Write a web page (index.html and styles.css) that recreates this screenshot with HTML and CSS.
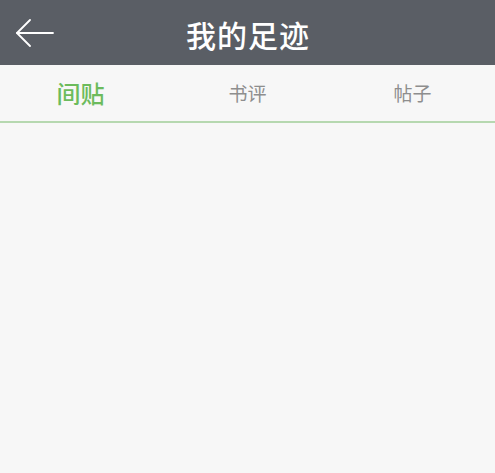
FILE: index.html
```html
<!DOCTYPE html>
<html lang="zh">
<head>
<meta charset="utf-8">
<title>我的足迹</title>
<link rel="stylesheet" href="styles.css">
</head>
<body>
<div class="page">
  <header class="topbar">
    <button class="back" aria-label="返回">
      <svg width="38" height="28" viewBox="0 0 38 28" fill="none" stroke="#ffffff" stroke-width="1.8" stroke-linecap="round" stroke-linejoin="round">
        <path d="M1 14 H37"/>
        <path d="M14 1 L1 14 L14 27"/>
      </svg>
    </button>
    <h1 class="title">我的足迹</h1>
  </header>
  <nav class="tabs">
    <div class="tab active">间贴</div>
    <div class="tab">书评</div>
    <div class="tab">帖子</div>
  </nav>
  <main class="content"></main>
</div>
</body>
</html>
```

FILE: styles.css
```css
* { box-sizing: border-box; }

html, body {
  margin: 0;
  padding: 0;
  height: 100%;
  background: #f7f7f7;
  font-family: "Noto Sans CJK SC", "Noto Sans", sans-serif;
}

.page {
  display: flex;
  flex-direction: column;
  height: 100%;
}

.topbar {
  position: relative;
  height: 65px;
  background: #5a5e65;
  display: flex;
  align-items: center;
  justify-content: center;
}

.back {
  position: absolute;
  left: 16px;
  top: 19px;
  padding: 0;
  border: 0;
  background: none;
  display: flex;
}

.title {
  margin: 0;
  color: #ffffff;
  font-size: 30px;
  font-weight: 500;
  line-height: 1;
  letter-spacing: 1px;
  margin-top: 2px;
  padding-left: 1px;
}

.tabs {
  display: grid;
  grid-template-columns: repeat(3, 1fr);
  height: 58px;
  border-bottom: 2px solid #b6d8b0;
  background: #f7f7f7;
}

.tab {
  display: flex;
  align-items: center;
  justify-content: center;
  font-size: 19px;
  color: #8e8e8e;
  padding-bottom: 2px;
}

.tab.active {
  font-size: 24px;
  font-weight: 500;
  color: #6cbb5c;
  padding-right: 4px;
}

.content {
  flex: 1;
  background: #f7f7f7;
}
```
